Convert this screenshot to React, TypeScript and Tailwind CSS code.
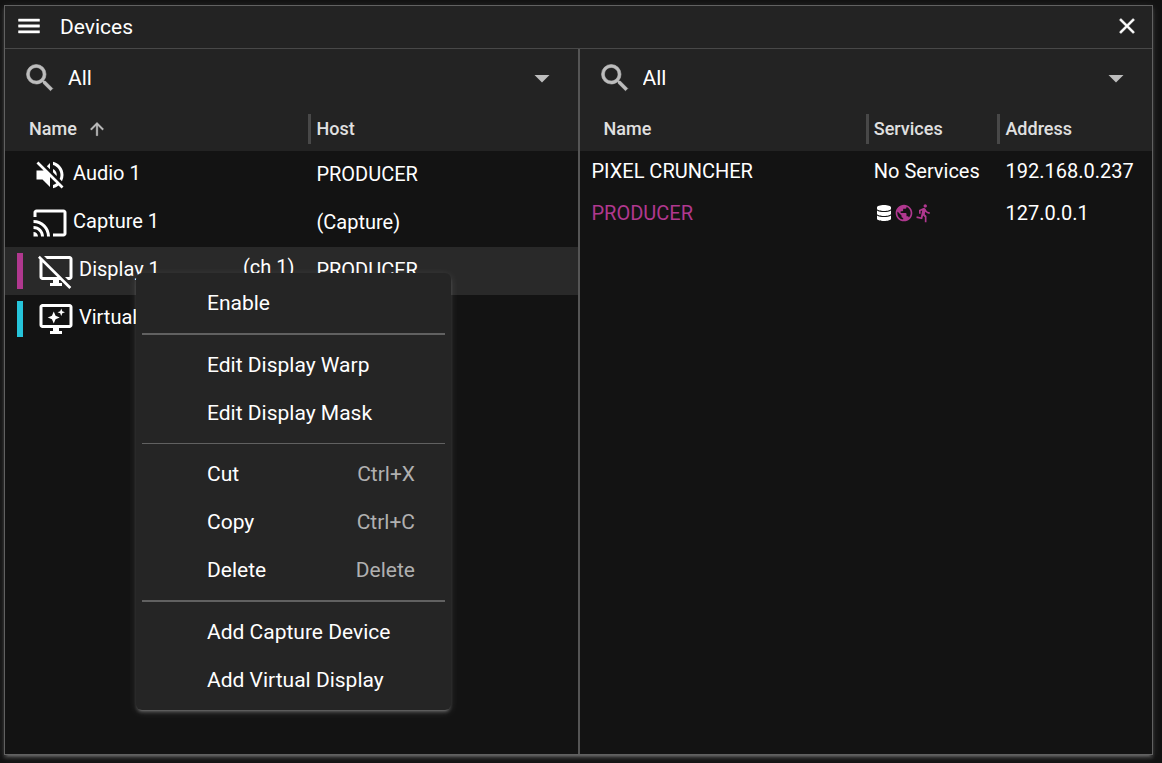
import React, { useState } from 'react';
import { MdArrowDropDown, MdCast, MdDesktopAccessDisabled, MdDirectionsRun, MdPublic, MdVolumeOff } from 'react-icons/md';
import { FaDatabase } from 'react-icons/fa';

interface Device {
  name: string;
  host: string;
  icon: React.ReactNode;
  channel?: string;
  bar?: string;
  selected?: boolean;
}

// Material icons drawn with a slightly heavier line
const BoldIcon = ({ d, size, className }: { d: string; size: number; className?: string }) => (
  <svg
    viewBox="0 0 24 24"
    width={size}
    height={size}
    fill="currentColor"
    stroke="currentColor"
    strokeWidth={0.4}
    className={className}
  >
    <path d={d} />
  </svg>
);

const MENU = 'M3 18h18v-2H3v2zm0-5h18v-2H3v2zm0-7v2h18V6H3z';
const CLOSE = 'M19 6.410L17.590 5 12 10.590 6.410 5 5 6.410 10.590 12 5 17.590 6.410 19 12 13.410 17.590 19 19 17.590 13.410 12z';
const ARROW_UP = 'M4 12l1.410 1.410L11 7.830V20h2V7.830l5.580 5.590L20 12l-8-8-8 8z';
const SEARCH =
  'M15.500 14h-.79l-.28-.27A6.471 6.471 0 0 0 16 9.500 6.500 6.500 0 1 0 9.500 16c1.610 0 3.090-.59 4.230-1.570l.27.28v.79l5 4.990L20.490 19l-4.990-5zm-6 0C7.010 14 5 11.990 5 9.500S7.010 5 9.500 5 14 7.010 14 9.500 11.990 14 9.500 14z';

const VirtualDisplayIcon = () => (
  <svg viewBox="0 0 24 24" width={36} height={36} fill="currentColor">
    <path d="M21 2H3c-1.1 0-2 .9-2 2v12c0 1.1.9 2 2 2h7v2H8v2h8v-2h-2v-2h7c1.1 0 2-.9 2-2V4c0-1.1-.9-2-2-2zm0 14H3V4h18v12z" />
    <path d="M10.500 7l1.200 2.800 2.800 1.200-2.800 1.200-1.200 2.800-1.200-2.800L6.500 11l2.800-1.200z" />
    <path d="M15.500 5l.7 1.800 1.800.7-1.800.7-.7 1.800-.7-1.800-1.800-.7 1.800-.7z" />
  </svg>
);

const devices: Device[] = [
  { name: 'Audio 1', host: 'PRODUCER', icon: <MdVolumeOff size={36} /> },
  { name: 'Capture 1', host: '(Capture)', icon: <MdCast size={36} /> },
  {
    name: 'Display 1',
    host: 'PRODUCER',
    icon: <MdDesktopAccessDisabled size={36} />,
    channel: '(ch 1)',
    bar: 'bg-[#b0388f]',
    selected: true,
  },
  { name: 'Virtual 1', host: '', icon: <VirtualDisplayIcon />, bar: 'bg-[#26c4da]' },
];

const FilterSelect = ({ id, label }: { id: string; label: string }) => {
  const [value, setValue] = useState('All');

  return (
    <div className="relative flex h-[58px] items-center pl-[17px]">
      <label htmlFor={id} aria-label={label} className="text-[#bdbdbd]">
        <BoldIcon d={SEARCH} size={36} />
      </label>
      <select
        id={id}
        value={value}
        onChange={(e) => setValue(e.target.value)}
        className="h-12 flex-1 appearance-none bg-transparent pt-0.5 pl-2.5 text-[21px] text-white outline-none"
      >
        <option>All</option>
      </select>
      <MdArrowDropDown size={36} className="pointer-events-none absolute right-[18px] text-[#bdbdbd]" />
    </div>
  );
};

const MenuItem = ({ label, shortcut }: { label: string; shortcut?: string }) => (
  <button
    role="menuitem"
    className="flex h-12 w-full items-center justify-between pt-0.5 pr-9 pl-[71px] text-left hover:bg-[#333]"
  >
    <span>{label}</span>
    {shortcut && <span className="text-[#b0b0b0]">{shortcut}</span>}
  </button>
);

const MenuDivider = ({ thin }: { thin?: boolean }) => (
  <hr className={`mx-1.5 my-1.5 border-0 bg-[#616161] ${thin ? 'h-px' : 'h-0.5'}`} />
);

const ContextMenu = () => (
  <div
    role="menu"
    className="absolute top-[273px] left-[136px] w-[315px] rounded-md bg-[#252525] py-1.5 text-[21px] text-white shadow-[0_4px_2px_-3px_rgba(255,255,255,0.2),0_3px_3px_0_rgba(255,255,255,0.14),0_2px_8px_0_rgba(255,255,255,0.12)]"
  >
    <MenuItem label="Enable" />
    <MenuDivider />
    <MenuItem label="Edit Display Warp" />
    <MenuItem label="Edit Display Mask" />
    <MenuDivider thin />
    <MenuItem label="Cut" shortcut="Ctrl+X" />
    <MenuItem label="Copy" shortcut="Ctrl+C" />
    <MenuItem label="Delete" shortcut="Delete" />
    <MenuDivider />
    <MenuItem label="Add Capture Device" />
    <MenuItem label="Add Virtual Display" />
  </div>
);

const HeaderCell = ({ children }: { children: React.ReactNode }) => (
  <th className="p-0 font-medium">
    <div className="flex h-[30px] items-center border-l-[3px] border-[#484848] pl-[5px]">{children}</div>
  </th>
);

const DeviceTable = () => (
  <table className="w-full table-fixed text-left text-xl">
    <colgroup>
      <col className="w-[53%]" />
      <col />
    </colgroup>
    <thead className="bg-[#232323] text-lg text-[#e0e0e0]">
      <tr className="h-11">
        <th className="p-0 pl-6 font-medium">
          <span className="flex items-center gap-[10px]">
            Name
            <BoldIcon d={ARROW_UP} size={20} className="text-[#bdbdbd]" />
          </span>
        </th>
        <HeaderCell>Host</HeaderCell>
      </tr>
    </thead>
    <tbody>
      {devices.map((device) => (
        <tr key={device.name} className={device.selected ? 'h-12 bg-[#292929]' : 'h-12'}>
          <td className="p-0">
            <div className={device.bar ? 'flex items-center pl-3' : 'flex items-center pl-[27px]'}>
              {device.bar && <span className={`mr-[15px] h-9 w-1.5 ${device.bar}`} />}
              {device.icon}
              <span className="flex-1 truncate pb-1 pl-[5px]">{device.name}</span>
              {device.channel && <span className="pr-3.5 pb-2">{device.channel}</span>}
            </div>
          </td>
          <td className="p-0 pb-0.5 pl-2">{device.host}</td>
        </tr>
      ))}
    </tbody>
  </table>
);

const HostTable = () => (
  <table className="w-full table-fixed text-left text-xl">
    <colgroup>
      <col />
      <col className="w-[23%]" />
      <col className="w-[27%]" />
    </colgroup>
    <thead className="bg-[#232323] text-lg text-[#e0e0e0]">
      <tr className="h-11">
        <th className="p-0 pl-6 font-medium">Name</th>
        <HeaderCell>Services</HeaderCell>
        <HeaderCell>Address</HeaderCell>
      </tr>
    </thead>
    <tbody>
      <tr className="h-[42px]">
        <td className="p-0 pb-0.5 pl-3">PIXEL CRUNCHER</td>
        <td className="p-0 pb-0.5 pl-2">No Services</td>
        <td className="p-0 pb-0.5 pl-2">192.168.0.237</td>
      </tr>
      <tr className="h-[42px]">
        <td className="p-0 pb-0.5 pl-3 text-[#b0388f]">PRODUCER</td>
        <td className="p-0 pb-0.5 pl-2">
          <span className="flex items-center text-[#b0388f]">
            <span className="flex w-5 justify-center text-white">
              <FaDatabase size={16} />
            </span>
            <MdPublic size={20} />
            <MdDirectionsRun size={20} />
          </span>
        </td>
        <td className="p-0 pb-0.5 pl-2">127.0.0.1</td>
      </tr>
    </tbody>
  </table>
);

const App: React.FC = () => {
  return (
    <div className="relative flex min-h-screen bg-[#121212] pt-[5px] pr-[9px] pb-2 pl-1 font-[Roboto,sans-serif] text-white">
      <main className="flex flex-1 flex-col border border-[#616161] bg-[#131313] shadow-[0_4px_2px_-3px_rgba(255,255,255,0.2),0_3px_3px_0_rgba(255,255,255,0.14),0_2px_8px_0_rgba(255,255,255,0.12)]">
        <header className="flex h-[43px] items-center border-b border-[#484848] bg-[#232323] pr-3 pb-0.5 pl-2.5">
          <button aria-label="Menu">
            <BoldIcon d={MENU} size={28} />
          </button>
          <h1 className="flex-1 pt-1 pl-[17px] text-[21px]">Devices</h1>
          <button aria-label="Close">
            <BoldIcon d={CLOSE} size={26} />
          </button>
        </header>
        <div className="flex flex-1">
          <section className="min-w-0 flex-1 border-r-2 border-[#555]">
            <div className="bg-[#232323]">
              <FilterSelect id="device-filter" label="Filter devices" />
            </div>
            <DeviceTable />
          </section>
          <section className="min-w-0 flex-1">
            <div className="bg-[#232323]">
              <FilterSelect id="host-filter" label="Filter hosts" />
            </div>
            <HostTable />
          </section>
        </div>
      </main>
      <ContextMenu />
    </div>
  );
};

export default App;
